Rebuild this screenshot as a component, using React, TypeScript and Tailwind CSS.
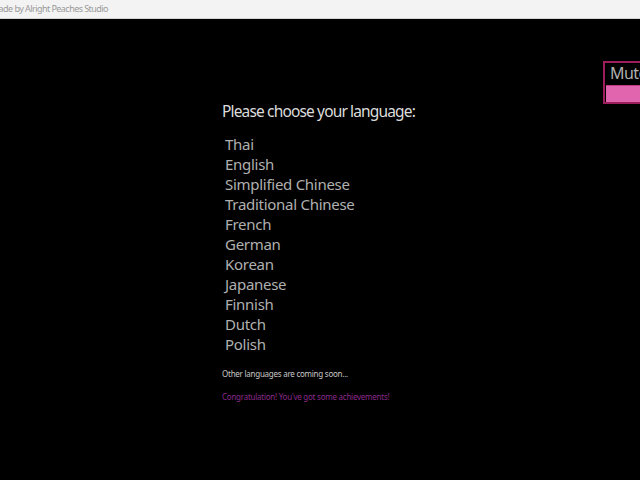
import React from "react";

const langs = ["Thai","English","Simplified Chinese","Traditional Chinese","French","German","Korean","Japanese","Finnish","Dutch","Polish"];

export default function App() {
  return (
    <div className="w-[640px] h-[480px] bg-black overflow-hidden relative" style={{fontFamily: '"Noto Sans", "Open Sans", sans-serif'}}>
      <div className="h-[19px] bg-[#f3f3f3] border-b border-[#d4d4d4] flex items-center overflow-hidden">
        <span className="text-[9px] tracking-[-0.55px] text-[#9a9a9a] whitespace-nowrap ml-[-9px]">Made by Alright Peaches Studio</span>
      </div>
      <div className="absolute left-[603px] top-[61px] w-[50px] h-[43px] border-2 border-[#9c1f5c] bg-black flex flex-col">
        <div className="h-[21px] text-[16px] leading-[21px] tracking-[-0.6px] text-[#b0b0b0] pl-[5px]">Mute</div>
        <div className="mt-[1px] ml-[1px] flex-1 bg-[#e065ae] border-t border-[#c23a85]"></div>
      </div>
      <div className="pl-[222px] pt-[81px] flex flex-col">
        <div className="text-[15.5px] leading-[22px] tracking-[-0.85px] text-[#dcdcdc]">Please choose your language:</div>
        <div className="mt-[12px] pl-[3px] flex flex-col">
          {langs.map((l) => (
            <div key={l} className="text-[15px] leading-[20px] tracking-[-0.28px] text-[#b0b0b0]">{l}</div>
          ))}
        </div>
        <div className="mt-[14px] text-[8px] leading-[12px] tracking-[-0.25px] text-[#c8c8c8]">Other languages are coming soon...</div>
        <div className="mt-[11px] text-[8px] leading-[12px] tracking-[-0.25px] text-[#8b2a8b]">Congratulation! You've got some achievements!</div>
      </div>
    </div>
  );
}
